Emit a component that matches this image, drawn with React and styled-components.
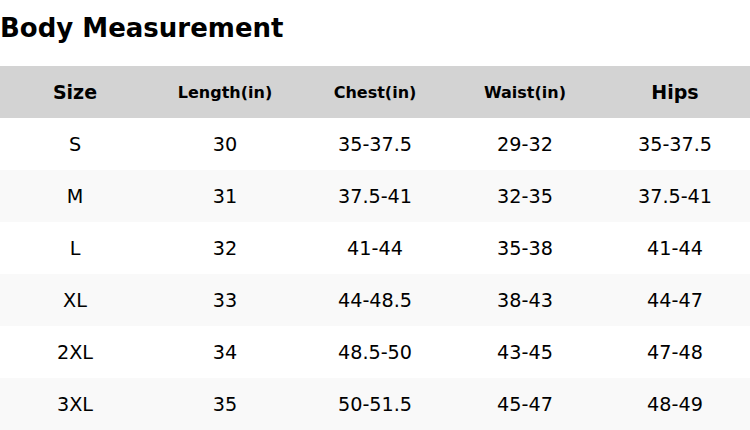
import styled, { createGlobalStyle } from "styled-components";

const GlobalStyle = createGlobalStyle`
  body {
    margin: 0;
    background: #ffffff;
    font-family: "DejaVu Sans", Verdana, sans-serif;
    color: #000000;
  }
`;

const Page = styled.div`
  width: 750px;
`;

const Title = styled.h2`
  margin: 0;
  height: 66px;
  box-sizing: border-box;
  padding-top: 13px;
  font-size: 26px;
  line-height: 30px;
  font-weight: 700;
`;

const Table = styled.table`
  width: 100%;
  border-collapse: collapse;
  table-layout: fixed;
`;

const HeadRow = styled.tr`
  background: #d3d3d3;
`;

const HeadCell = styled.th`
  height: 52px;
  padding: 0;
  text-align: center;
  vertical-align: middle;
  font-weight: 700;
  font-size: ${(p) => (p.$small ? "16px" : "19px")};
`;

const Row = styled.tr`
  background: ${(p) => (p.$striped ? "#f9f9f9" : "#ffffff")};
`;

const Cell = styled.td`
  height: 52px;
  padding: 0;
  text-align: center;
  vertical-align: middle;
  font-size: 19.2px;
`;

const headers = [
  { label: "Size" },
  { label: "Length(in)", small: true },
  { label: "Chest(in)", small: true },
  { label: "Waist(in)", small: true },
  { label: "Hips" },
];

const rows = [
  ["S", "30", "35-37.5", "29-32", "35-37.5"],
  ["M", "31", "37.5-41", "32-35", "37.5-41"],
  ["L", "32", "41-44", "35-38", "41-44"],
  ["XL", "33", "44-48.5", "38-43", "44-47"],
  ["2XL", "34", "48.5-50", "43-45", "47-48"],
  ["3XL", "35", "50-51.5", "45-47", "48-49"],
];

export default function App() {
  return (
    <>
      <GlobalStyle />
      <Page>
        <Title>Body Measurement</Title>
        <Table>
          <thead>
            <HeadRow>
              {headers.map((h) => (
                <HeadCell key={h.label} $small={h.small}>
                  {h.label}
                </HeadCell>
              ))}
            </HeadRow>
          </thead>
          <tbody>
            {rows.map((r, i) => (
              <Row key={r[0]} $striped={i % 2 === 1}>
                {r.map((v, j) => (
                  <Cell key={j}>{v}</Cell>
                ))}
              </Row>
            ))}
          </tbody>
        </Table>
      </Page>
    </>
  );
}
